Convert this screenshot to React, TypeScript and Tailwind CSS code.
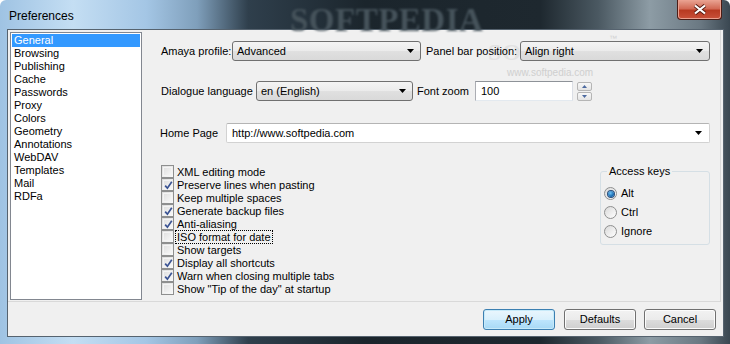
import React from 'react';

const categories = [
  'General', 'Browsing', 'Publishing', 'Cache', 'Passwords', 'Proxy', 'Colors',
  'Geometry', 'Annotations', 'WebDAV', 'Templates', 'Mail', 'RDFa',
];

const options = [
  { label: 'XML editing mode', checked: false },
  { label: 'Preserve lines when pasting', checked: true },
  { label: 'Keep multiple spaces', checked: false },
  { label: 'Generate backup files', checked: true },
  { label: 'Anti-aliasing', checked: true },
  { label: 'ISO format for date', checked: false, focus: true },
  { label: 'Show targets', checked: false },
  { label: 'Display all shortcuts', checked: true },
  { label: 'Warn when closing multiple tabs', checked: true },
  { label: 'Show "Tip of the day" at startup', checked: false },
];

const Arrow = () => (
  <svg width="7" height="4" viewBox="0 0 7 4" className="shrink-0">
    <polygon points="0,0 7,0 3.5,4" fill="#000" />
  </svg>
);

const Select = ({ value, className }: { value: string; className: string }) => (
  <div className={`h-[20px] flex items-center justify-between pl-[4px] pr-[6px] border border-[#707070] rounded-[3px] bg-[linear-gradient(#f4f4f4,#ebebeb_50%,#e0e0e0_51%,#d9d9d9)] ${className}`}>
    <span>{value}</span>
    <Arrow />
  </div>
);

const CheckBox = ({ checked }: { checked: boolean }) => (
  <div className="w-[13px] h-[13px] shrink-0 border border-[#8e8f8f] bg-[linear-gradient(135deg,#dcdcdc,#fbfbfb)] p-px">
    <div className="w-full h-full border border-[#f4f4f4] relative">
      {checked && (
        <svg width="11" height="11" viewBox="0 0 11 11" className="absolute -left-px -top-px">
          <path d="M2.2 5.6 L4.4 8.2 L8.8 1.8" stroke="#3a5393" strokeWidth="1.7" fill="none" />
        </svg>
      )}
    </div>
  </div>
);

const Radio = ({ on }: { on: boolean }) => (
  <div className="w-[13px] h-[13px] shrink-0 rounded-full border border-[#8e8f8f] bg-[linear-gradient(135deg,#d9d9d9,#ffffff)] flex items-center justify-center">
    {on && <div className="w-[6px] h-[6px] rounded-full bg-[radial-gradient(circle_at_40%_35%,#6fc3f5,#0d5fa8_70%)] ring-1 ring-[#2a4e7b]" />}
  </div>
);

const Button = ({ label, focused }: { label: string; focused?: boolean }) => (
  <div
    className={`w-[72px] h-[21px] flex items-center justify-center rounded-[3px] border ${
      focused
        ? 'border-[#3c7fb1] bg-[linear-gradient(#eaf6fd,#d9f0fc_50%,#bee6fd_51%,#a7d9f5)] shadow-[inset_0_0_0_1px_#c7eaf9]'
        : 'border-[#707070] bg-[linear-gradient(#f2f2f2,#ebebeb_50%,#dddddd_51%,#cfcfcf)] shadow-[inset_0_0_0_1px_#fcfcfc]'
    }`}
  >
    {label}
  </div>
);

export default function App() {
  return (
    <div className="w-[730px] h-[344px] flex flex-col overflow-hidden rounded-t-[6px] bg-[linear-gradient(90deg,#9fc3e3_0%,#c4def3_10%,#a4c6e5_20%,#7f9fbb_27%,#2f3f4c_34%,#1b252c_50%,#1e282f_74%,#4b5962_82%,#8d9ca5_89%,#6a7882_96%,#3a4751_100%)] font-['Liberation_Sans',Arial,sans-serif] text-[11px] text-black">
      {/* title bar */}
      <div className="h-[29px] flex items-start relative shrink-0">
        <span className="absolute left-[290px] -top-[4px] font-['Liberation_Serif',serif] font-bold text-[33px] tracking-[0.5px] text-[#46535b] blur-[0.8px] pointer-events-none">SOFTPEDIA</span>
        <span className="relative pl-[9px] pt-[7px] text-[12px] text-black">Preferences</span>
        <div className="relative ml-auto mr-[8px] w-[45px] h-[20px] rounded-b-[4px] border border-t-0 border-[#4c1d16] bg-[linear-gradient(#e9a493,#d26a55_45%,#b83a22_55%,#c9513a)] flex items-center justify-center shadow-[inset_0_0_0_1px_#eaa08f]">
          <svg width="14" height="11" viewBox="0 0 14 11">
            <path d="M2 1.5 L12 9.5 M12 1.5 L2 9.5" stroke="#5a1e14" strokeWidth="4" />
            <path d="M2 1.5 L12 9.5 M12 1.5 L2 9.5" stroke="#ffffff" strokeWidth="2.2" />
          </svg>
        </div>
      </div>

      {/* client area */}
      <div className="ml-[7px] w-[717px] h-[308px] border border-[#56636f] bg-[#f0f0f0] flex flex-col">
        <div className="w-[713px] h-[272px] border-r border-b border-[#d9d9d9] flex pl-[2px] pt-[2px]">
          {/* category list */}
          <div className="w-[132px] h-[268px] border border-[#828790] bg-white pt-px pl-px">
            {categories.map((c, i) => (
              <div
                key={c}
                className={`w-[128px] h-[13px] leading-[13px] pl-[2px] ${i === 0 ? 'bg-[#3399ff] text-white' : ''}`}
              >
                {c}
              </div>
            ))}
          </div>

          {/* settings panel */}
          <div className="flex-1 relative pl-[19px] pt-[9px]">
            <span className="absolute left-[346px] top-[2px] font-['Liberation_Serif',serif] font-bold text-[24px] tracking-[1px] text-[#e2e2e2] pointer-events-none">SOFTPEDIA</span>
            <span className="absolute left-[467px] top-[1px] text-[8px] text-[#d0d0d0] pointer-events-none">™</span>
            <span className="absolute left-[365px] top-[33px] text-[10px] text-[#cfcfcf] pointer-events-none">www.softpedia.com</span>

            <div className="relative flex items-center">
              <span className="w-[71px]">Amaya profile:</span>
              <Select value="Advanced" className="w-[189px]" />
              <span className="ml-[5px] w-[94px]">Panel bar position:</span>
              <Select value="Align right" className="w-[190px]" />
            </div>

            <div className="flex items-center mt-[20px]">
              <span className="w-[95px]">Dialogue language</span>
              <Select value="en (English)" className="w-[157px]" />
              <span className="ml-[4px] w-[58px]">Font zoom</span>
              <div className="w-[98px] h-[20px] flex items-center pl-[5px] bg-white border border-[#abadb3] border-t-[#8e9298] border-r-[#dbdfe6] border-b-[#e3e9ef]">100</div>
              <div className="ml-[4px] w-[15px] h-[19px] flex flex-col gap-px">
                <div className="h-[9px] border border-[#b5b5b5] rounded-[2px] bg-[linear-gradient(#f8f8f8,#e4e4e4)] flex items-center justify-center">
                  <svg width="5" height="3" viewBox="0 0 5 3"><polygon points="0,3 5,3 2.5,0" fill="#4d6aa0" /></svg>
                </div>
                <div className="h-[9px] border border-[#b5b5b5] rounded-[2px] bg-[linear-gradient(#f8f8f8,#e4e4e4)] flex items-center justify-center">
                  <svg width="5" height="3" viewBox="0 0 5 3"><polygon points="0,0 5,0 2.5,3" fill="#4d6aa0" /></svg>
                </div>
              </div>
            </div>

            <div className="flex items-center mt-[22px] -ml-px">
              <span className="w-[66px]">Home Page</span>
              <div className="w-[484px] h-[20px] flex items-center justify-between pl-[5px] pr-[7px] bg-white border border-[#d2d2d2] border-t-[#b4b4b4] rounded-[2px]">
                <span>http://www.softpedia.com</span>
                <Arrow />
              </div>
            </div>

            <div className="flex mt-[22px]">
              <div className="flex flex-col">
                {options.map((o) => (
                  <div key={o.label} className="h-[13px] flex items-center">
                    <CheckBox checked={o.checked} />
                    <span className={`ml-px px-px leading-[12px] ${o.focus ? 'border border-dotted border-black' : 'border border-transparent'}`}>
                      {o.label}
                    </span>
                  </div>
                ))}
              </div>

              <div className="relative ml-auto mr-[10px] mt-[6px] w-[110px] h-[74px] rounded-[3px] border border-[#d5dfe5] pl-[3px] pt-[15px] flex flex-col gap-[6px]">
                <span className="absolute -top-[7px] left-[6px] px-[2px] bg-[#f0f0f0] leading-[13px]">Access keys</span>
                {['Alt', 'Ctrl', 'Ignore'].map((k, i) => (
                  <div key={k} className="h-[13px] flex items-center gap-[4px]">
                    <Radio on={i === 0} />
                    <span>{k}</span>
                  </div>
                ))}
              </div>
            </div>
          </div>
        </div>

        <div className="flex justify-end gap-[8px] pt-[7px] pr-[7px]">
          <div className="w-[73px]"><Button label="Apply" focused /></div>
          <Button label="Defaults" />
          <Button label="Cancel" />
        </div>
      </div>
    </div>
  );
}
